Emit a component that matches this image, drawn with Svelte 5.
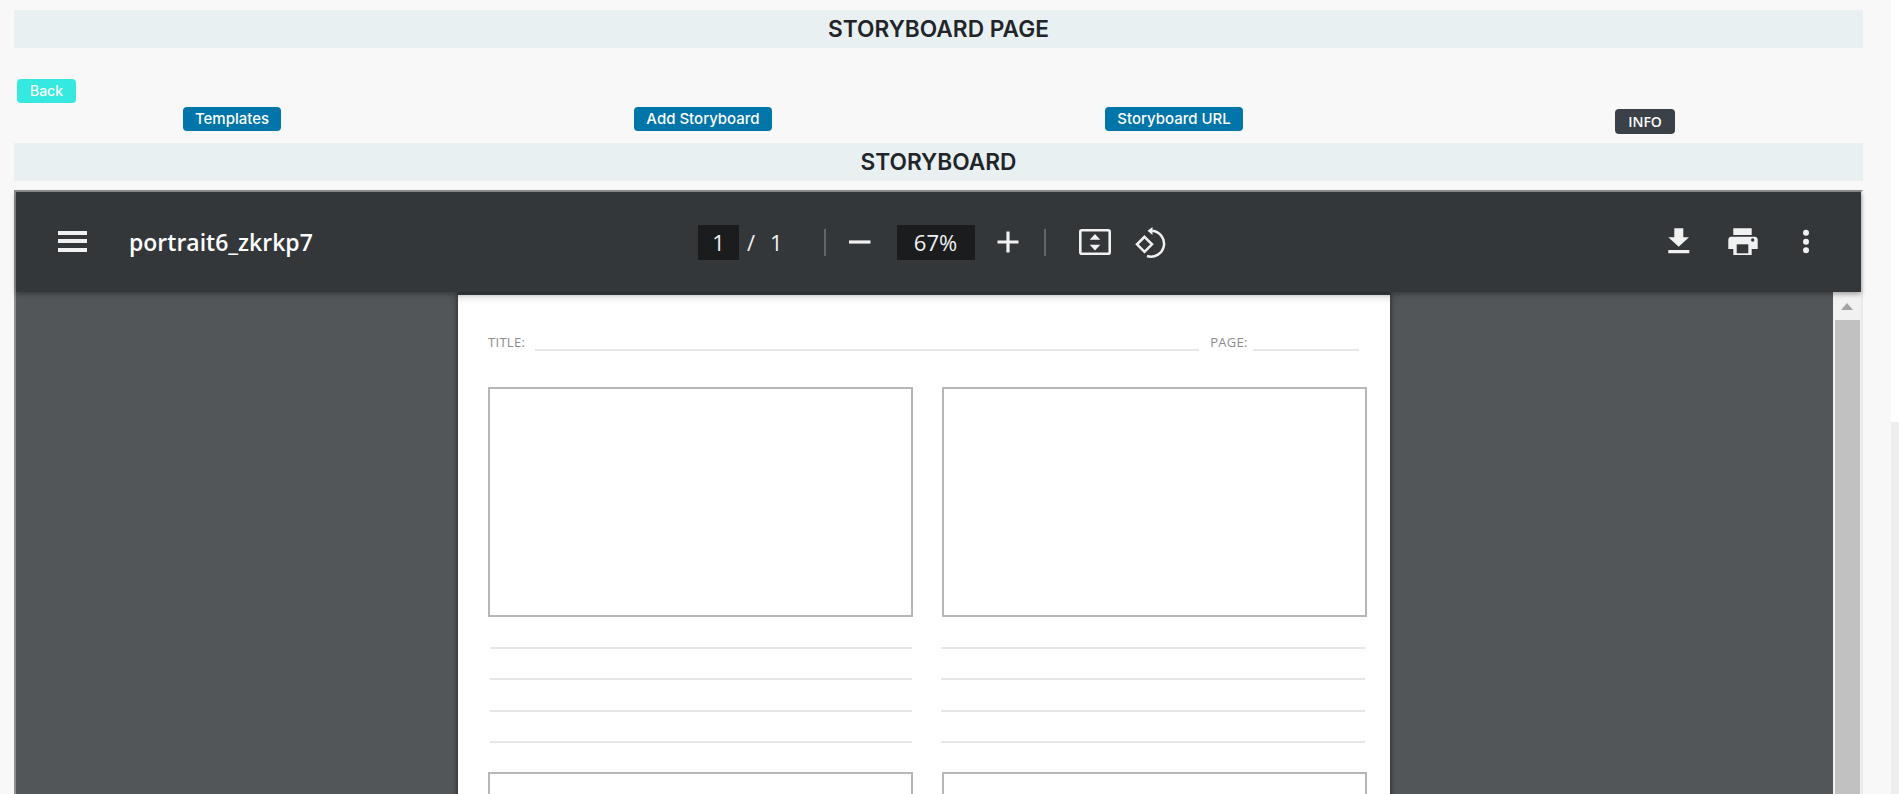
<script>
  const buttons = ['Templates', 'Add Storyboard', 'Storyboard URL'];
  const rows = [0, 1, 2, 3];
</script>

<div class="page">
  <h4 class="banner">STORYBOARD PAGE</h4>
  <div class="back-row"><button class="btn back">Back</button></div>
  <div class="actions">
    {#each buttons as b}
      <div class="cell"><button class="btn primary">{b}</button></div>
    {/each}
    <div class="cell"><button class="btn info">INFO</button></div>
  </div>
  <h4 class="banner">STORYBOARD</h4>

  <div class="frame">
    <header class="toolbar">
      <div class="tb-left">
        <svg class="menu" width="29" height="28" viewBox="0 0 29 28"><path d="M0 3h29v4H0zM0 11h29v4H0zM0 20h29v4H0z" fill="#f1f1f1"/></svg>
        <span class="title">portrait6_zkrkp7</span>
      </div>
      <div class="tb-center">
        <span class="field page-field">1</span>
        <span class="sep-text">/</span>
        <span class="count">1</span>
        <span class="divider d1"></span>
        <svg class="minus" width="24" height="24" viewBox="0 0 24 24"><path d="M1 10.400h21.500v3.200H1z" fill="#f1f1f1"/></svg>
        <span class="field zoom-field">67%</span>
        <svg class="plus" width="22" height="22" viewBox="0 0 22 22"><path d="M.5 9.400h8.900V.5h3.200v8.900h8.900v3.200h-8.900v8.900H9.400v-8.900H.5z" fill="#f1f1f1"/></svg>
        <span class="divider d2"></span>
        <svg class="fit" width="32" height="26" viewBox="0 0 32 26"><rect x="1.300" y="1.300" width="29.400" height="23.400" rx="1.500" fill="none" stroke="#f1f1f1" stroke-width="2.600"/><path d="M16 5l5.300 5.800H10.700zM16 21.500l-5.300-5.800h10.600z" fill="#f1f1f1"/></svg>
        <svg class="rotate" width="31" height="31" viewBox="0 0 31 31"><path d="M9.500 9.800 17 17.300 9.500 24.800 2 17.300z" fill="none" stroke="#f1f1f1" stroke-width="2.500"/><path d="M17.200 3.700A13 13 0 1 1 12 29" fill="none" stroke="#f1f1f1" stroke-width="2.500"/><path d="M17.500 0v8l-5-4.300z" fill="#f1f1f1"/></svg>
      </div>
      <div class="tb-right">
        <svg class="dl" width="22" height="26" viewBox="0 0 22 26"><path d="M6.300.3h9v9H21L10.700 18.700.3 9.300h6zM.3 22h21v3.300H.3z" fill="#f1f1f1"/></svg>
        <svg class="pr" width="30" height="27" viewBox="0 0 30 27"><path d="M5.300.3h18.400V7H5.300zM3.300 8.700h23.400c1.700 0 3 1.300 3 3V21h-6v6H5.300v-6h-5v-9.300c0-1.700 1.300-3 3-3z" fill="#f1f1f1"/><path d="M8.700 16.300h11.600v9H8.700z" fill="#33373a"/><circle cx="24.700" cy="12" r="1.700" fill="#33373a"/></svg>
        <svg class="dots" width="8" height="26" viewBox="0 0 8 26"><circle cx="4" cy="3.700" r="3" fill="#f1f1f1"/><circle cx="4" cy="12.700" r="3" fill="#f1f1f1"/><circle cx="4" cy="21.300" r="3" fill="#f1f1f1"/></svg>
      </div>
    </header>

    <div class="viewer">
      <div class="sheet">
        <div class="meta">
          <span class="lbl">TITLE:</span><span class="rule title-rule"></span>
          <span class="lbl page-lbl">PAGE:</span><span class="rule page-rule"></span>
        </div>
        <div class="panels">
          {#each [0, 1] as c}
            <div class="panel-box"></div>
          {/each}
        </div>
        <div class="notes">
          {#each [0, 1] as c}
            <div class="note-col" class:second={c === 1}>
              {#each rows as r}<span class="note"></span>{/each}
            </div>
          {/each}
        </div>
        <div class="panels next">
          {#each [0, 1] as c}
            <div class="panel-box"></div>
          {/each}
        </div>
      </div>
      <div class="vscroll">
        <span class="arrow"></span>
        <span class="thumb"></span>
      </div>
    </div>
  </div>
  <span class="page-track"><span class="page-thumb"></span></span>
</div>

<style>
  :global(body) {
    margin: 0;
    background: #f8f8f8;
  }
  .page {
    position: relative;
    height: 794px;
    overflow: hidden;
    box-sizing: border-box;
    padding: 10px 36px 0 14px;
    font-family: "Inter", "Liberation Sans", sans-serif;
  }
  .banner {
    margin: 0;
    height: 38px;
    line-height: 38px;
    text-align: center;
    background: #e8f0f2;
    color: #212529;
    font-size: 22.700px;
    font-weight: 600;
  }
  .back-row {
    padding: 31px 0 0 3px;
    height: 24px;
    line-height: 0;
  }
  .btn {
    border: 0;
    margin: 0;
    height: 24px;
    padding: 0;
    border-radius: 4px;
    color: #fff;
    font-family: inherit;
    font-size: 15px;
    font-weight: 500;
    line-height: 24px;
  }
  .back {
    width: 59px;
    font-size: 14px;
    background: #36e9e0;
  }
  .actions {
    display: grid;
    grid-template-columns: repeat(4, 1fr);
    margin: 4px -17.500px 9px;
    height: 27px;
  }
  .cell {
    display: flex;
    justify-content: center;
    align-items: flex-start;
  }
  .primary {
    background: #0075a9;
    padding: 0 12px;
  }
  .info {
    margin-top: 2px;
    height: 25px;
    width: 60px;
    background: #3a4149;
    font-family: "Open Sans", sans-serif;
    font-weight: 600;
    font-size: 14px;
  }
  .frame {
    margin-top: 9px;
    border: 2px solid;
    border-color: #8f8f8f #e8e8e8 #e8e8e8 #8f8f8f;
    height: 700px;
    display: flex;
    flex-direction: column;
    font-family: "Open Sans", "Noto Sans", sans-serif;
  }
  .toolbar {
    position: relative;
    z-index: 2;
    flex: none;
    height: 100px;
    background: #33373a;
    color: #f1f1f1;
    display: grid;
    grid-template-columns: 1fr auto 1fr;
    align-items: center;
    box-shadow: 0 2px 5px rgba(0, 0, 0, 0.35);
  }
  .tb-left {
    display: flex;
    align-items: center;
    padding-left: 42px;
  }
  .title {
    margin-left: 42px;
    font-size: 23px;
    font-weight: 600;
    color: #fff;
    white-space: nowrap;
  }
  .tb-center {
    display: flex;
    align-items: center;
    width: 481px;
    font-size: 22px;
  }
  .field {
    display: block;
    height: 35px;
    line-height: 35px;
    text-align: center;
    background: #1a1c1e;
    color: #f1f1f1;
  }
  .page-field { width: 41px; }
  .sep-text { margin-left: 8px; }
  .count { margin-left: 15px; }
  .divider {
    width: 2px;
    height: 27px;
    background: #62666a;
  }
  .d1 { margin-left: 41px; }
  .minus { margin-left: 22.700px; }
  .zoom-field { width: 78px; margin-left: 24.200px; }
  .plus { margin-left: 22.500px; }
  .d2 { margin-left: 25px; }
  .fit { margin-left: 33px; }
  .rotate { margin-left: 24px; }
  .tb-right {
    display: flex;
    justify-content: flex-end;
    align-items: flex-start;
    align-self: start;
    padding: 36px 51px 0 0;
  }
  .pr { margin-left: 38px; }
  .dots { margin-left: 43.700px; margin-top: 1px; }
  .viewer {
    flex: 1;
    position: relative;
    display: flex;
    background: #525659;
    min-height: 0;
    overflow: hidden;
  }
  .sheet {
    position: absolute;
    left: 442px;
    top: 0;
    width: 932px;
    height: 100%;
    box-sizing: border-box;
    padding: 0 0 0 30px;
    border-top: 3px solid #3a3e41;
    background: linear-gradient(#ededed, #fff 10px);
    box-shadow: 0 0 6px rgba(0, 0, 0, 0.6);
    color: #8c8c8c;
  }
  .meta {
    display: flex;
    align-items: flex-start;
    height: 92px;
    padding-top: 39px;
    box-sizing: border-box;
    font-family: "Open Sans", sans-serif;
    font-size: 13px;
    letter-spacing: 0.3px;
    line-height: 16px;
  }
  .rule {
    display: block;
    height: 2px;
    margin-top: 15px;
    background: #e6e6e6;
  }
  .title-rule { width: 664px; margin-left: 9.500px; }
  .page-lbl { margin-left: 11.500px; }
  .page-rule { width: 106px; margin-left: 5.500px; }
  .panels {
    display: flex;
    gap: 29px;
  }
  .panel-box {
    width: 425px;
    height: 230px;
    box-sizing: border-box;
    border: 2px solid #b7b7b7;
    flex: none;
  }
  .notes {
    display: flex;
    padding-left: 2px;
    gap: 29px;
    margin-top: 30px;
  }
  .note-col {
    width: 422px;
    display: flex;
    flex-direction: column;
    gap: 29.300px;
  }
  .note-col.second { width: 424px; }
  .note {
    display: block;
    height: 2px;
    background: #e6e6e6;
  }
  .panels.next { margin-top: 29.500px; }
  .vscroll {
    position: absolute;
    right: 0;
    top: 0;
    bottom: 0;
    width: 28px;
    background: #f1f1f1;
  }
  .arrow {
    position: absolute;
    left: 8px;
    top: 11px;
    border-left: 6.500px solid transparent;
    border-right: 6.500px solid transparent;
    border-bottom: 7px solid #a3a3a3;
  }
  .thumb {
    position: absolute;
    left: 2px;
    right: 1px;
    top: 28px;
    bottom: 0;
    background: #c1c1c1;
  }
  .page-track {
    position: absolute;
    right: 0;
    top: 0;
    bottom: 0;
    width: 8px;
    background: #fff;
  }
  .page-thumb {
    position: absolute;
    left: 0;
    right: 0;
    top: 422px;
    bottom: 0;
    background: #eeeeee;
  }
</style>
